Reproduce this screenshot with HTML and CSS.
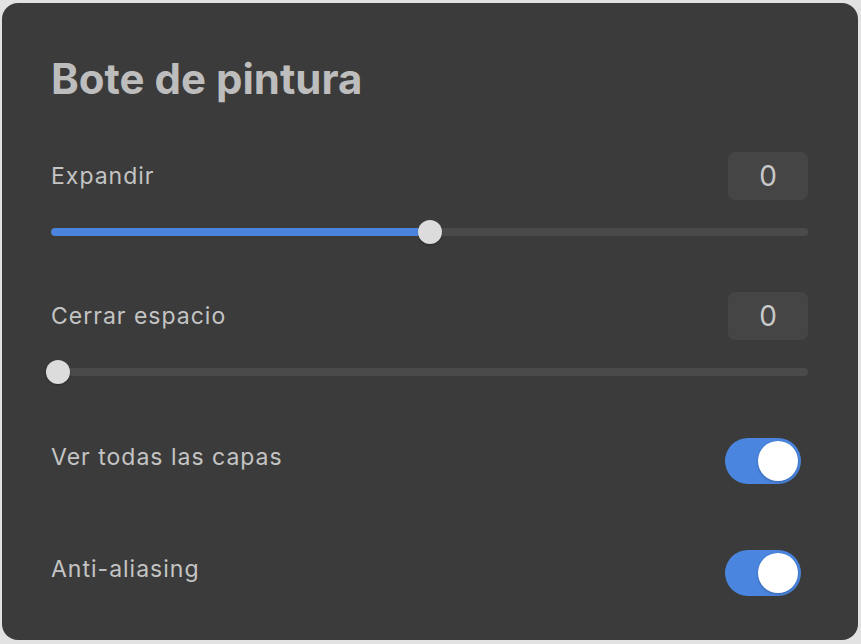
FILE: index.html
```html
<!DOCTYPE html>
<html lang="es">
<head>
  <meta charset="UTF-8" />
  <meta name="viewport" content="width=device-width, initial-scale=1.0"/>
  <title>Bote de pintura</title>
  <link rel="stylesheet" href="styles.css">
</head>
<body>
  <div class="panel">
    <h1 class="title">Bote de pintura</h1>

    <!-- Expandir -->
    <div class="field">
      <div class="field-head">
        <span class="label">Expandir</span>
        <span class="value">0</span>
      </div>
      <div class="slider">
        <div class="track">
          <div class="fill" style="width: calc(7px + 50%)"></div>
        </div>
        <div class="range">
          <span class="thumb" style="left: 50%"></span>
        </div>
      </div>
    </div>

    <!-- Cerrar espacio -->
    <div class="field field-second">
      <div class="field-head">
        <span class="label">Cerrar espacio</span>
        <span class="value">0</span>
      </div>
      <div class="slider">
        <div class="track"></div>
        <div class="range">
          <span class="thumb" style="left: 0%"></span>
        </div>
      </div>
    </div>

    <div class="toggle-row toggle-first">
      <span class="label">Ver todas las capas</span>
      <span class="switch on"><span class="knob"></span></span>
    </div>

    <div class="toggle-row toggle-second">
      <span class="label">Anti-aliasing</span>
      <span class="switch on"><span class="knob"></span></span>
    </div>
  </div>
</body>
</html>
```

FILE: styles.css
```css
body {
  margin: 0;
  padding: 3px 3px 4px 2px;
  background-color: #e2e2e2;
  font-family: Inter, "Noto Sans", "Liberation Sans", sans-serif;
}

.panel {
  box-sizing: border-box;
  height: 637px;
  background-color: #3b3b3b;
  border-radius: 16px;
  padding: 0 49px;
  overflow: hidden;
}

.title {
  margin: 0;
  padding-top: 52px;
  font-size: 42px;
  line-height: 48px;
  font-weight: 700;
  color: #bdbdbd;
}

.label {
  font-size: 23px;
  letter-spacing: 1px;
  color: #c4c4c4;
}

.field {
  margin-top: 49px;
}

.field-second {
  margin-top: 48px;
}

.field-head {
  display: flex;
  justify-content: space-between;
  align-items: center;
  height: 48px;
}

.value {
  width: 80px;
  height: 48px;
  margin-right: 1px;
  border-radius: 7px;
  background-color: #454545;
  color: #c8c8c8;
  font-size: 28px;
  display: flex;
  align-items: center;
  justify-content: center;
}

.slider {
  position: relative;
  height: 24px;
  margin-top: 20px;
  margin-right: 1px;
  display: flex;
  align-items: center;
}

.track {
  width: 100%;
  height: 8px;
  border-radius: 4px;
  background-color: #4a4a4a;
  overflow: hidden;
}

.fill {
  height: 100%;
  background-color: #4a86e0;
  border-radius: 4px;
}

.range {
  position: absolute;
  top: 0;
  bottom: 0;
  left: 7px;
  right: 7px;
}

.thumb {
  position: absolute;
  top: 0;
  width: 24px;
  height: 24px;
  margin-left: -12px;
  border-radius: 50%;
  background-color: #dcdcdc;
  box-shadow: 0 1px 2px rgba(0, 0, 0, 0.3);
}

.toggle-row {
  display: flex;
  justify-content: space-between;
  align-items: center;
  height: 46px;
  padding-right: 8px;
}

.toggle-row .label {
  margin-bottom: 8px;
}

.toggle-first {
  margin-top: 54px;
}

.toggle-second {
  margin-top: 66px;
}

.switch {
  box-sizing: border-box;
  width: 76px;
  height: 46px;
  border-radius: 23px;
  background-color: #4a86e0;
  padding: 3px;
  display: flex;
  justify-content: flex-end;
}

.knob {
  width: 40px;
  height: 40px;
  border-radius: 50%;
  background-color: #ffffff;
  box-shadow: 0 1px 3px rgba(0, 0, 0, 0.25);
}
```
